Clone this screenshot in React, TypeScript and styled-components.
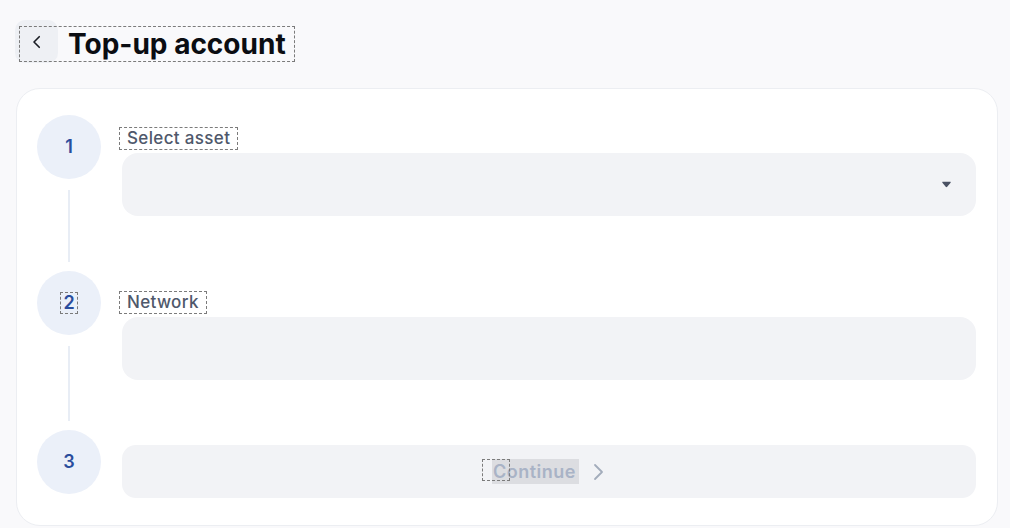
import styled, { createGlobalStyle } from "styled-components";

const GlobalStyle = createGlobalStyle`
  html, body {
    margin: 0;
    background: #f9f9fb;
    font-family: Inter, "Noto Sans", "Liberation Sans", sans-serif;
    -webkit-font-smoothing: antialiased;
  }
`;

const Page = styled.div`
  padding: 20px 12px 0 16px;
  box-sizing: border-box;
  height: 528px;
  overflow: hidden;
`;

const Header = styled.div`
  display: inline-flex;
  align-items: center;
  gap: 10px;
  height: 34px;
  margin: 7px 0 0 4px;
  padding-right: 8px;
  outline: 1px dashed #7b7b7b;
`;

const BackButton = styled.button`
  width: 43px;
  height: 43px;
  margin: -7px 0 -2px -5px;
  align-self: flex-start;
  border: 0;
  border-radius: 10px;
  background: #eef0f4;
  display: flex;
  align-items: center;
  justify-content: center;
  padding: 0;
  color: #1a1d24;
`;

const Title = styled.h1`
  margin: 0;
  font-size: 28px;
  font-weight: 700;
  color: #0b0d12;
  line-height: 34px;
`;

const Card = styled.div`
  margin-top: 27px;
  width: 982px;
  height: 438px;
  box-sizing: border-box;
  background: #fff;
  border: 1px solid #eceef2;
  border-radius: 24px;
  padding: 26px 21px 0 20px;
`;

const Step = styled.div<{ $height: number }>`
  display: grid;
  grid-template-columns: 64px 1fr;
  column-gap: 21px;
  min-height: ${(p) => p.$height}px;
`;

const Rail = styled.div`
  display: flex;
  flex-direction: column;
  align-items: center;
`;

const Bubble = styled.div`
  width: 64px;
  height: 64px;
  flex: none;
  border-radius: 50%;
  background: #ebf0f9;
  color: #2a4d9d;
  font-size: 18px;
  font-weight: 600;
  display: flex;
  align-items: center;
  justify-content: center;
`;

const Num = styled.span<{ $marked?: boolean }>`
  line-height: 20px;
  padding: 0 2px;
  outline: ${(p) => (p.$marked ? "1px dashed #7b7b7b" : "none")};
`;

const Connector = styled.div`
  width: 2px;
  flex: 1;
  margin: 11px 0 9px;
  background: #e8edf5;
`;

const Body = styled.div<{ $top: number }>`
  padding-top: ${(p) => p.$top}px;
  display: flex;
  flex-direction: column;
  align-items: flex-start;
`;

const Label = styled.div`
  font-size: 17px;
  line-height: 21px;
  font-weight: 500;
  color: #4f586b;
  padding: 0 7px;
  margin: 1px 0 0 -2px;
  outline: 1px dashed #7b7b7b;
  letter-spacing: 0.35px;
`;

const Field = styled.div`
  margin-top: 4px;
  width: 100%;
  height: 63px;
  border-radius: 16px;
  background: #f2f3f6;
  display: flex;
  align-items: center;
  justify-content: flex-end;
  padding-right: 25px;
  box-sizing: border-box;
`;

const ContinueButton = styled.button`
  width: 100%;
  height: 53px;
  border: 0;
  border-radius: 14px;
  background: #f2f3f6;
  display: flex;
  align-items: center;
  justify-content: center;
  gap: 13px;
  padding: 0 2px 0 0;
  font-family: inherit;
  font-size: 18px;
  font-weight: 600;
  letter-spacing: 0.5px;
  color: #a9b3c6;
`;

// selected label text, with the caret box sitting over its first letter
const Highlight = styled.span`
  position: relative;
  background: #dcdde1;
  line-height: 25px;
  padding: 0 3px 0 1px;
`;

const CaretMark = styled.span`
  position: absolute;
  left: -9px;
  top: 1px;
  width: 26px;
  height: 20px;
  outline: 1px dashed #7b7b7b;
`;

const App = () => {
  return (
    <>
      <GlobalStyle />
      <Page>
        <Header>
          <BackButton aria-label="Back">
            <svg width="18" height="18" viewBox="0 0 24 24" fill="none">
              <path
                d="M15 5l-7 7 7 7"
                stroke="currentColor"
                strokeWidth="2.2"
                strokeLinecap="round"
                strokeLinejoin="round"
              />
            </svg>
          </BackButton>
          <Title>Top-up account</Title>
        </Header>

        <Card>
          <Step $height={156}>
            <Rail>
              <Bubble>
                <Num>1</Num>
              </Bubble>
              <Connector />
            </Rail>
            <Body $top={12}>
              <Label>Select asset</Label>
              <Field>
                <svg width="9" height="7" viewBox="0 0 9 7">
                  <path
                    d="M0.8 0.8h7.4c0.5 0 0.7 0.5 0.4 0.9L5.2 5.8c-0.4 0.5-1.1 0.5-1.5 0L0.4 1.7C0.1 1.3 0.3 0.8 0.8 0.8z"
                    fill="#4a5163"
                  />
                </svg>
              </Field>
            </Body>
          </Step>

          <Step $height={159}>
            <Rail>
              <Bubble>
                <Num $marked>2</Num>
              </Bubble>
              <Connector />
            </Rail>
            <Body $top={20}>
              <Label>Network</Label>
              <Field />
            </Body>
          </Step>

          <Step $height={64}>
            <Rail>
              <Bubble>
                <Num>3</Num>
              </Bubble>
            </Rail>
            <Body $top={15}>
              <ContinueButton disabled>
                <Highlight>
                  <CaretMark />
                  Continue
                </Highlight>
                <svg width="12" height="18" viewBox="0 0 12 18" fill="none">
                  <path
                    d="M3 2l7 7-7 7"
                    stroke="#a3acbb"
                    strokeWidth="1.8"
                    strokeLinecap="round"
                    strokeLinejoin="round"
                  />
                </svg>
              </ContinueButton>
            </Body>
          </Step>
        </Card>
      </Page>
    </>
  );
};

export default App;
